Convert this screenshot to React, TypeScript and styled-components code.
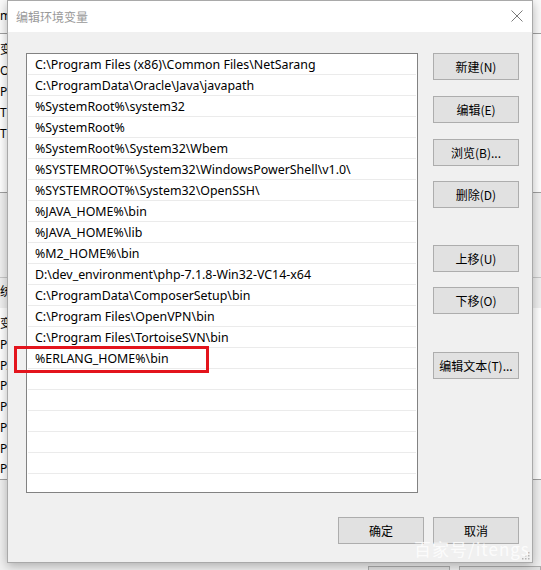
import React from 'react';
import styled, { createGlobalStyle } from 'styled-components';

const GlobalStyle = createGlobalStyle`
  html, body { margin: 0; padding: 0; overflow: hidden; background: #f0f0f0; }
  body { font-family: "Noto Sans", "Noto Sans CJK SC", sans-serif; }
  * { box-sizing: border-box; }
`;

const Desktop = styled.div`
  position: relative;
  width: 541px;
  height: 570px;
  overflow: hidden;
  background: #f0f0f0;
`;

/* ---------- window behind the dialog ---------- */
const BackWindow = styled.div`
  display: flex;
  flex-direction: column;
  width: 541px;
  height: 570px;
  font-size: 12px;
  color: #000;
`;

const BackTop = styled.div`
  height: 34px;
  display: flex;
  align-items: center;
  background: #fafafa;
  border-bottom: 1px solid #a0a0a0;
  padding-bottom: 2px;
`;

const BackList = styled.div<{ $h: number }>`
  height: ${(p) => p.$h}px;
  background: #fff;
  border-bottom: 1px solid #a0a0a0;
  padding-top: 5px;
  display: flex;
  flex-direction: column;
`;

const BackRow = styled.div`
  width: 7px;
  height: 21px;
  line-height: 21px;
  overflow: hidden;
  white-space: nowrap;
`;

const BackGap = styled.div<{ $h: number }>`
  height: ${(p) => p.$h}px;
  border-bottom: 1px solid #c8c8c8;
`;

const BackLabel = styled.div`
  width: 7px;
  height: 30px;
  line-height: 26px;
  overflow: hidden;
  white-space: nowrap;
  font-family: "Noto Sans CJK SC", sans-serif;
`;

const BackFill = styled.div`
  flex: 1;
`;

const BackButtons = styled.div`
  display: flex;
  gap: 9px;
  padding-left: 368px;
  height: 4px;
`;

const BackButton = styled.div`
  width: 86px;
  height: 20px;
  border: 1px solid #adadad;
  background: #e1e1e1;
`;

/* ---------- dialog ---------- */
const Dialog = styled.div`
  position: absolute;
  left: 7px;
  top: 0;
  width: 526px;
  height: 563px;
  display: flex;
  flex-direction: column;
  background: #f0f0f0;
  border: 1px solid #a9a9a9;
  box-shadow: 0 3px 10px rgba(0, 0, 0, 0.28);
`;

const TitleBar = styled.div`
  height: 31px;
  flex: none;
  display: flex;
  align-items: center;
  justify-content: space-between;
  background: #fff;
  padding: 0 9px 0 8px;
`;

const Title = styled.span`
  font-family: "Noto Sans CJK SC", sans-serif;
  font-size: 12px;
  color: #999;
  margin-top: -1px;
`;

const CloseIcon = styled.svg`
  width: 12px;
  height: 12px;
  margin-top: -2px;
`;

const Body = styled.div`
  flex: 1;
  display: flex;
  flex-direction: column;
  padding: 21px 13px 18px 18px;
`;

const MainRow = styled.div`
  display: flex;
  align-items: flex-start;
  gap: 15px;
`;

const List = styled.div`
  width: 392px;
  height: 440px;
  background: #fff;
  border: 1px solid #828282;
  overflow: hidden;
  display: flex;
  flex-direction: column;
`;

const Row = styled.div`
  flex: none;
  height: 21px;
  margin: 0 1px;
  padding: 1px 0 0 7px;
  border-bottom: 1px solid #ebebeb;
  font-size: 12.4px;
  line-height: 20px;
  color: #000;
  white-space: nowrap;
`;

const SideButtons = styled.div`
  display: flex;
  flex-direction: column;
`;

const Button = styled.button<{ $top?: number }>`
  width: 86px;
  height: 27px;
  padding: 0;
  margin-top: ${(p) => p.$top ?? 0}px;
  border: 1px solid #adadad;
  background: #e1e1e1;
  color: #000;
  font-family: "Noto Sans CJK SC", sans-serif;
  font-size: 12px;
  line-height: 24px;
  text-align: center;
`;

const Footer = styled.div`
  margin-top: 24px;
  display: flex;
  justify-content: flex-end;
  gap: 9px;
`;

const Grip = styled.svg`
  position: absolute;
  right: 2px;
  bottom: 2px;
  width: 8px;
  height: 8px;
`;

const Highlight = styled.div`
  position: absolute;
  left: 14px;
  top: 346px;
  width: 195px;
  height: 27px;
  border: 3px solid #e3141c;
`;

const Watermark = styled.div`
  position: absolute;
  left: 414px;
  top: 536px;
  font-family: "Noto Sans CJK SC", sans-serif;
  font-size: 17px;
  letter-spacing: 1px;
  color: rgba(255, 255, 255, 0.8);
  white-space: nowrap;
`;

const paths = [
  'C:\\Program Files (x86)\\Common Files\\NetSarang',
  'C:\\ProgramData\\Oracle\\Java\\javapath',
  '%SystemRoot%\\system32',
  '%SystemRoot%',
  '%SystemRoot%\\System32\\Wbem',
  '%SYSTEMROOT%\\System32\\WindowsPowerShell\\v1.0\\',
  '%SYSTEMROOT%\\System32\\OpenSSH\\',
  '%JAVA_HOME%\\bin',
  '%JAVA_HOME%\\lib',
  '%M2_HOME%\\bin',
  'D:\\dev_environment\\php-7.1.8-Win32-VC14-x64',
  'C:\\ProgramData\\ComposerSetup\\bin',
  'C:\\Program Files\\OpenVPN\\bin',
  'C:\\Program Files\\TortoiseSVN\\bin',
  '%ERLANG_HOME%\\bin',
];

const rows = [...paths, ...Array(6).fill('')];

const sideButtons: { label: string; top: number }[] = [
  { label: '新建(N)', top: 0 },
  { label: '编辑(E)', top: 16 },
  { label: '浏览(B)...', top: 16 },
  { label: '删除(D)', top: 15 },
  { label: '上移(U)', top: 37 },
  { label: '下移(O)', top: 15 },
  { label: '编辑文本(T)...', top: 38 },
];

const userVars = ['变量', 'OneDrive', 'Path', 'TEMP', 'TMP'];
const sysVars = [
  '变量',
  'Path',
  'PATHEXT',
  'PROCESSOR_ARCHITECTURE',
  'PROCESSOR_IDENTIFIER',
  'PROCESSOR_LEVEL',
  'PROCESSOR_REVISION',
  'PSModulePath',
];

export default function App() {
  return (
    <Desktop>
      <GlobalStyle />
      <BackWindow>
        <BackTop>
          <BackRow>m</BackRow>
        </BackTop>
        <BackList $h={159}>
          {userVars.map((v) => (
            <BackRow key={v}>{v}</BackRow>
          ))}
        </BackList>
        <BackGap $h={85} />
        <BackLabel>统</BackLabel>
        <BackList $h={172}>
          {sysVars.map((v) => (
            <BackRow key={v}>{v}</BackRow>
          ))}
        </BackList>
        <BackFill />
        <BackButtons>
          <BackButton />
          <BackButton />
        </BackButtons>
      </BackWindow>

      <Dialog>
        <TitleBar>
          <Title>编辑环境变量</Title>
          <CloseIcon viewBox="0 0 12 12">
            <path d="M0.5 0.5 L11.5 11.5 M11.5 0.5 L0.5 11.5" stroke="#7a7a7a" strokeWidth="1" fill="none" />
          </CloseIcon>
        </TitleBar>
        <Body>
          <MainRow>
            <List>
              {rows.map((r, i) => (
                <Row key={i}>{r}</Row>
              ))}
            </List>
            <SideButtons>
              {sideButtons.map((b) => (
                <Button key={b.label} $top={b.top}>
                  {b.label}
                </Button>
              ))}
            </SideButtons>
          </MainRow>
          <Footer>
            <Button>确定</Button>
            <Button>取消</Button>
          </Footer>
        </Body>
        <Grip viewBox="0 0 8 8">
          <g fill="#b5b5b5">
            <rect x="6" y="0" width="1.5" height="1.5" />
            <rect x="3" y="3" width="1.5" height="1.5" />
            <rect x="6" y="3" width="1.5" height="1.5" />
            <rect x="0" y="6" width="1.5" height="1.5" />
            <rect x="3" y="6" width="1.5" height="1.5" />
            <rect x="6" y="6" width="1.5" height="1.5" />
          </g>
        </Grip>
      </Dialog>

      <Highlight />
      <Watermark>百家号/itengs</Watermark>
    </Desktop>
  );
}
